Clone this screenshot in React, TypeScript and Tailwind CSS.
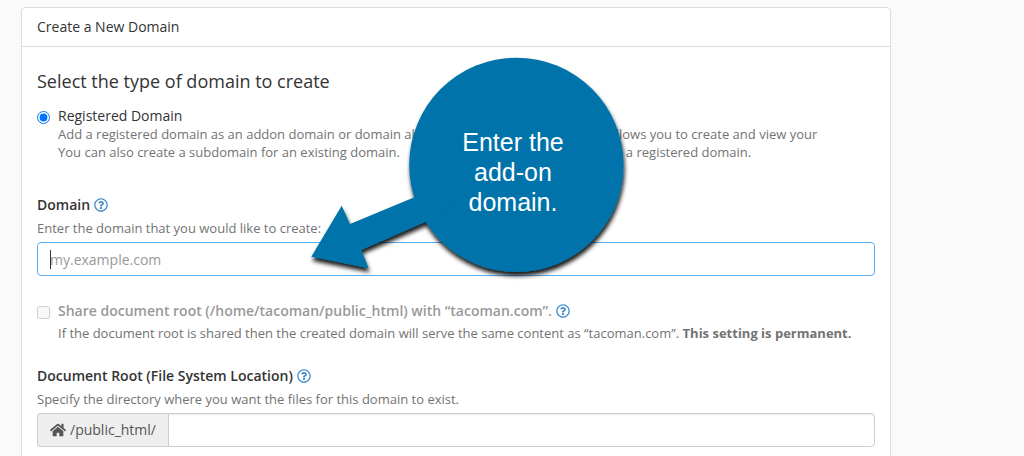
import { useState } from 'react';
import type { ReactNode } from 'react';
import { FaHome, FaRegQuestionCircle } from 'react-icons/fa';

function HelpButton({ label }: { label: string }) {
  return (
    <button type="button" aria-label={label} className="text-sm text-[#428bca]">
      <FaRegQuestionCircle />
    </button>
  );
}

function HelpText({ id, children }: { id: string; children: ReactNode }) {
  return (
    <p id={id} className="text-[13px] leading-5 text-[#737373]">
      {children}
    </p>
  );
}

function Callout() {
  return (
    <div className="pointer-events-none absolute left-[287px] top-2 h-[224px] w-[318px]">
      <svg viewBox="0 0 318 224" className="absolute inset-0 h-full w-full overflow-visible">
        <defs>
          <filter id="callout-shadow" x="-10%" y="-10%" width="120%" height="120%">
            <feDropShadow dx="1" dy="4" stdDeviation="2" floodColor="#000" floodOpacity="0.9" />
          </filter>
        </defs>
        <g fill="#0073aa" filter="url(#callout-shadow)">
          <circle cx="207.4" cy="109.9" r="107.2" />
          <path d="M2.3 201.7 32.7 150.7 41 169 106 142 150 150 117 166.7 52.3 195 59.7 213.3Z" />
        </g>
      </svg>
      <p className="absolute inset-y-0 right-1 flex w-[220px] items-center justify-center px-12 pt-[10px] text-center font-['Liberation_Sans',sans-serif] text-[25px] leading-[30px] text-white">
        Enter the add-on domain.
      </p>
    </div>
  );
}

export default function App() {
  const [domain, setDomain] = useState('');
  const [root, setRoot] = useState('');

  return (
    <main className="min-h-screen bg-[#fafafa] px-[21px] pt-[7px] font-['Open_Sans',sans-serif] text-sm text-[#333]">
      <section className="max-w-[870px] rounded border border-[#ddd] bg-white shadow-xs">
        <h1 className="border-b border-[#ddd] px-[15px] py-[9px] leading-5">Create a New Domain</h1>

        <form className="relative px-[15px] pt-6 pb-6">
          {/* Domain type */}
          <fieldset>
            <legend className="text-lg leading-5">Select the type of domain to create</legend>
            <div className="mt-4 flex gap-2">
              <input
                type="radio"
                id="registered"
                name="domain-type"
                defaultChecked
                className="mt-1 size-[13px] shrink-0"
                aria-describedby="registered-help"
              />
              <div className="leading-[18px]">
                <label htmlFor="registered" className="block">
                  Registered Domain
                </label>
                <p id="registered-help" className="text-[13px] text-[#737373]">
                  Add a registered domain as an addon domain or domain alias. A registered domain always allows you to create and view your
                  <br />
                  You can also create a subdomain for an existing domain.{' '}
                  <span className="mx-4">A subdomain is used alongside</span> a registered domain.
                </p>
              </div>
            </div>
          </fieldset>

          {/* Domain name */}
          <div className="mt-[34px]">
            <div className="mb-[3px] flex items-center gap-1 leading-5">
              <label htmlFor="domain" className="font-semibold">
                Domain
              </label>
              <HelpButton label="About domains" />
            </div>
            <HelpText id="domain-help">Enter the domain that you would like to create:</HelpText>
            <div className="relative mt-1">
              <input
                type="text"
                id="domain"
                value={domain}
                onChange={(e) => setDomain(e.target.value)}
                placeholder="my.example.com"
                aria-describedby="domain-help"
                className="block h-[34px] w-full rounded border border-[#5caef7] px-3 text-sm outline-none placeholder:text-[#999]"
              />
              <span className="absolute left-[13px] top-2 h-[19px] w-px bg-[#333]" />
            </div>
          </div>

          {/* Shared document root */}
          <div className="mt-[25px] flex gap-2">
            <input
              type="checkbox"
              id="share-root"
              disabled
              aria-describedby="share-help"
              className="mt-[5px] size-[13px] shrink-0"
            />
            <div>
              <div className="mb-[2px] flex items-center gap-1 leading-5">
                <label htmlFor="share-root" className="font-semibold text-[#999]">
                  Share document root (/home/tacoman/public_html) with “tacoman.com”.
                </label>
                <HelpButton label="About sharing the document root" />
              </div>
              <HelpText id="share-help">
                If the document root is shared then the created domain will serve the same content as “tacoman.com”.{' '}
                <strong className="font-bold">This setting is permanent.</strong>
              </HelpText>
            </div>
          </div>

          {/* Document root */}
          <div className="mt-[23px]">
            <div className="mb-[3px] flex items-center gap-1 leading-5">
              <label htmlFor="doc-root" className="font-semibold">
                Document Root (File System Location)
              </label>
              <HelpButton label="About the document root" />
            </div>
            <HelpText id="root-help">Specify the directory where you want the files for this domain to exist.</HelpText>
            <div className="mt-1 flex h-[34px]">
              <span className="flex items-center gap-1 rounded-l border border-r-0 border-[#ccc] bg-[#eee] px-3 text-[#555]">
                <FaHome className="text-base" />
                /public_html/
              </span>
              <input
                type="text"
                id="doc-root"
                value={root}
                onChange={(e) => setRoot(e.target.value)}
                aria-describedby="root-help"
                className="min-w-0 flex-1 rounded-r border border-[#ccc] px-3 text-sm shadow-[inset_0_1px_1px_rgba(0,0,0,0.075)] outline-none"
              />
            </div>
          </div>

          <Callout />
        </form>
      </section>
    </main>
  );
}
